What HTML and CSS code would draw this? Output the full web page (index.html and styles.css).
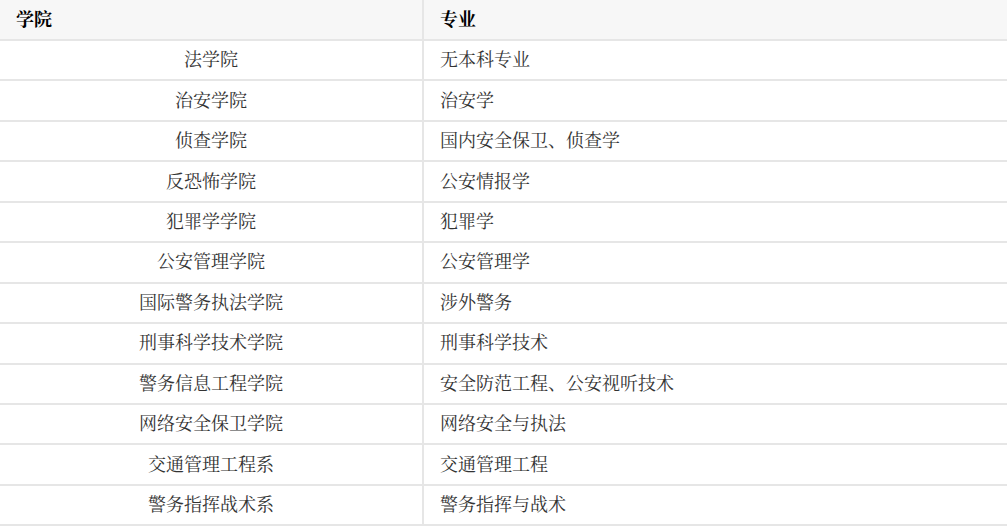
FILE: index.html
```html
<!DOCTYPE html>
<html lang="zh-CN">
<head>
<meta charset="utf-8">
<link rel="stylesheet" href="styles.css">
</head>
<body>
<table class="majors">
  <thead>
    <tr><th class="col-school">学院</th><th class="col-major">专业</th></tr>
  </thead>
  <tbody>
    <tr><td class="col-school">法学院</td><td class="col-major">无本科专业</td></tr>
    <tr><td class="col-school">治安学院</td><td class="col-major">治安学</td></tr>
    <tr><td class="col-school">侦查学院</td><td class="col-major">国内安全保卫、侦查学</td></tr>
    <tr><td class="col-school">反恐怖学院</td><td class="col-major">公安情报学</td></tr>
    <tr><td class="col-school">犯罪学学院</td><td class="col-major">犯罪学</td></tr>
    <tr><td class="col-school">公安管理学院</td><td class="col-major">公安管理学</td></tr>
    <tr><td class="col-school">国际警务执法学院</td><td class="col-major">涉外警务</td></tr>
    <tr><td class="col-school">刑事科学技术学院</td><td class="col-major">刑事科学技术</td></tr>
    <tr><td class="col-school">警务信息工程学院</td><td class="col-major">安全防范工程、公安视听技术</td></tr>
    <tr><td class="col-school">网络安全保卫学院</td><td class="col-major">网络安全与执法</td></tr>
    <tr><td class="col-school">交通管理工程系</td><td class="col-major">交通管理工程</td></tr>
    <tr><td class="col-school">警务指挥战术系</td><td class="col-major">警务指挥与战术</td></tr>
  </tbody>
</table>
</body>
</html>
```
FILE: styles.css
```css
html, body {
  margin: 0;
  padding: 0;
  background: #fff;
}
body {
  font-family: "Noto Serif CJK SC", "Noto Sans CJK SC", serif;
  font-size: 18px;
  color: #333;
  overflow: hidden;
}
.majors {
  border-collapse: separate;
  border-spacing: 0;
  width: 1040px;
}
.majors th,
.majors td {
  border-bottom: 2px solid #e6e6e6;
  padding: 0 16px 4px;
  box-sizing: content-box;
  line-height: 24px;
  vertical-align: middle;
}
.majors th {
  height: 35px;
  background: #f7f7f7;
  color: #000;
  font-weight: bold;
  text-align: left;
}
.majors td {
  height: 34.45px;
}
.majors .col-school {
  width: 390px;
  border-right: 2px solid #e6e6e6;
}
.majors td.col-school {
  text-align: center;
}
.majors .col-major {
  text-align: left;
}
```
